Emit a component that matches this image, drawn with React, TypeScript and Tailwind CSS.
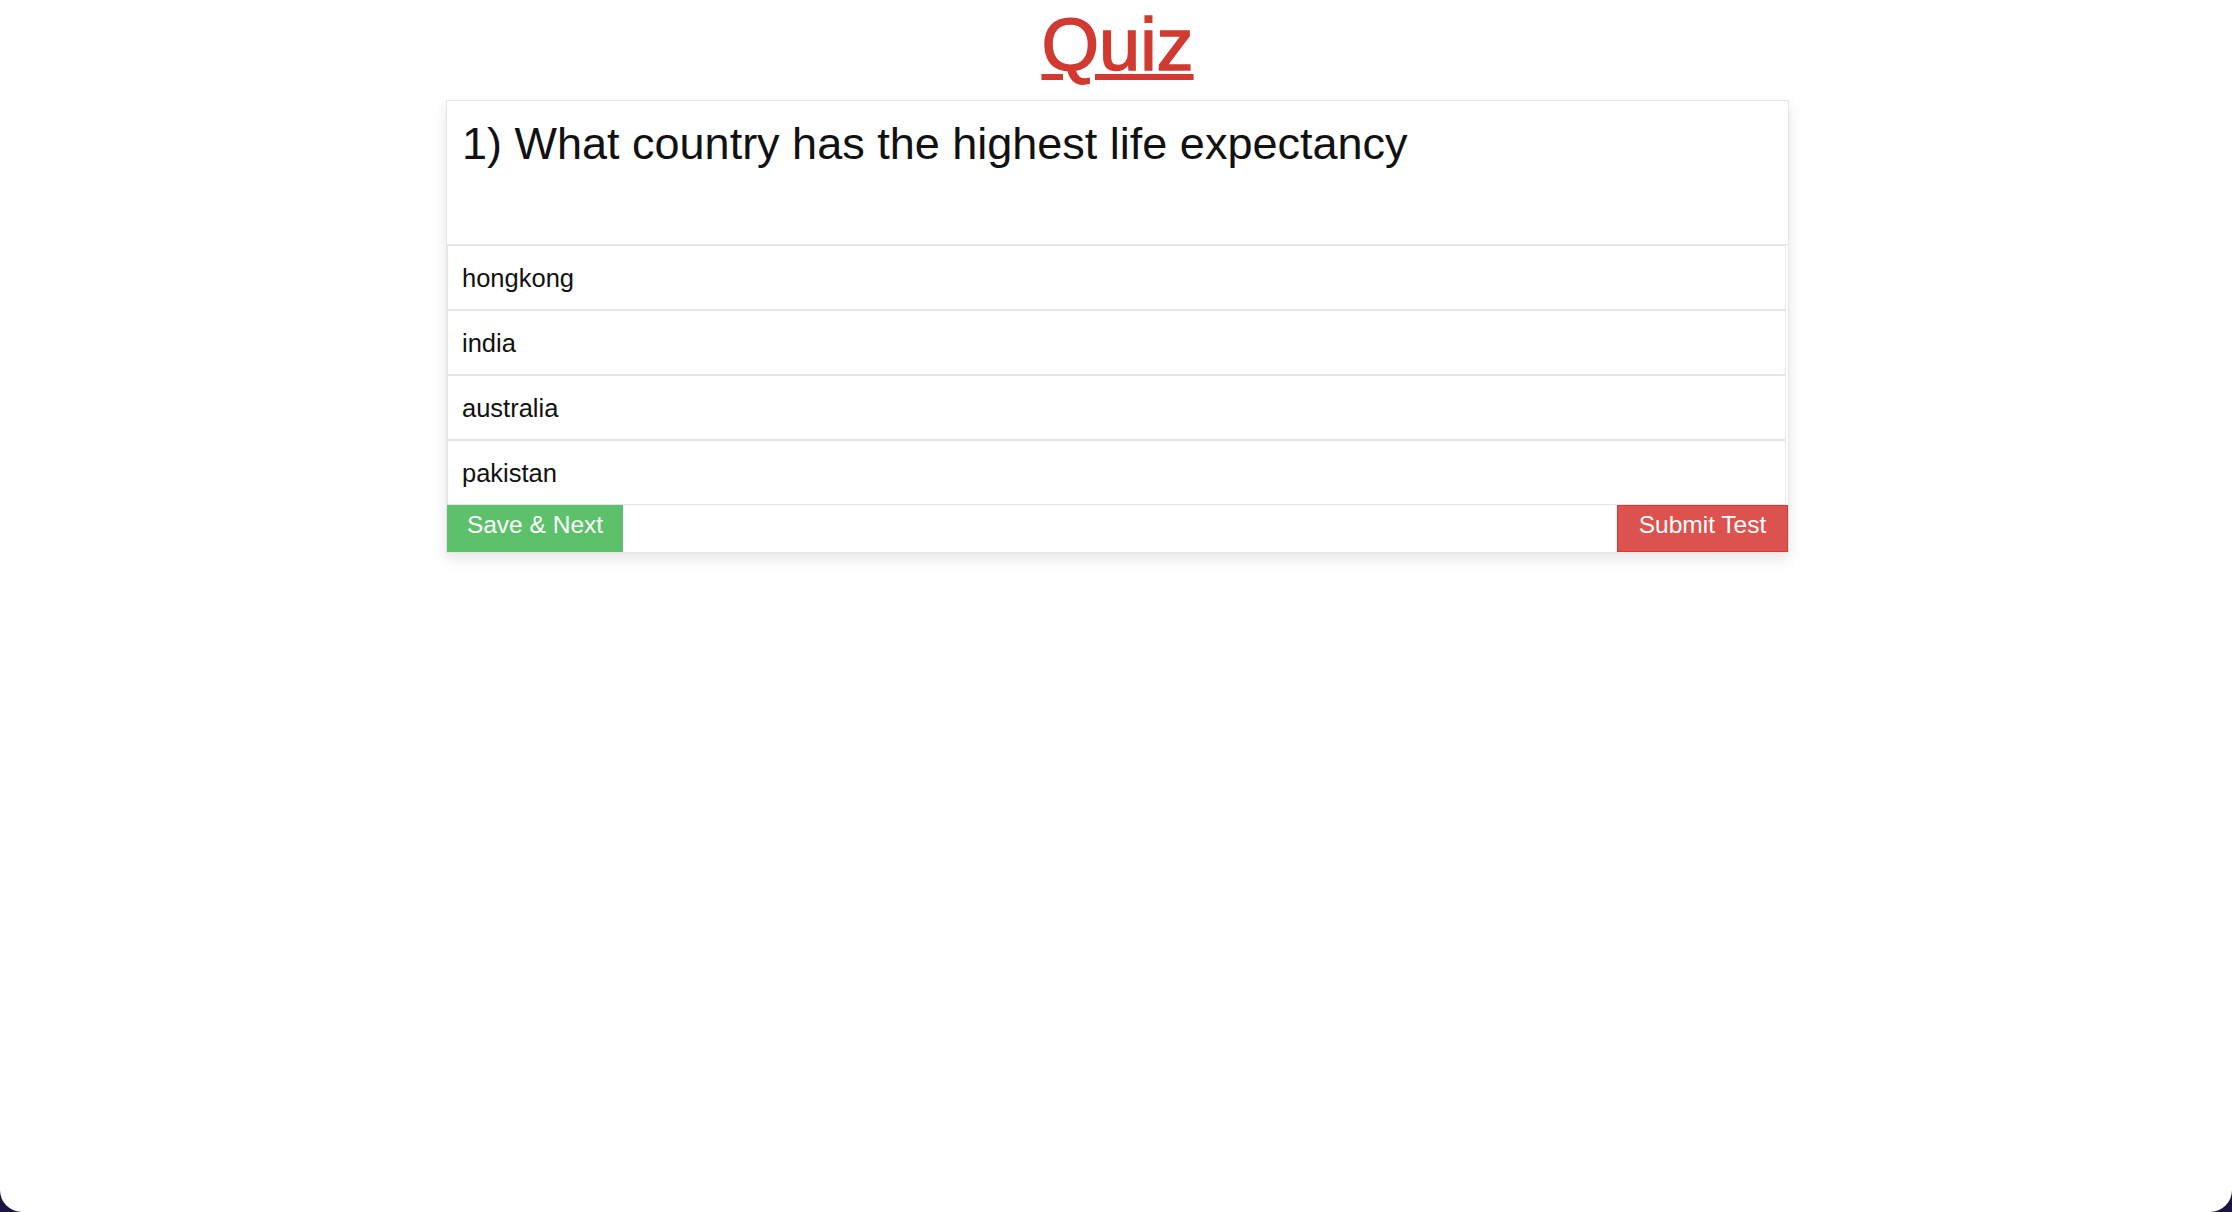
import React from "react";

const options = ["hongkong", "india", "australia", "pakistan"];

export default function App() {
  return (
    <div className="w-full h-[1212px] bg-[#1b1442]">
      <div
        className="w-full h-full bg-white rounded-b-[22px] flex flex-col items-center pl-[3px]"
        style={{ fontFamily: '"Liberation Sans", Arial, sans-serif' }}
      >
        <a
          href="#"
          className="block mt-[-3px] mb-[7px] text-[74px] leading-[96px] text-[#d03a30] underline decoration-[6px] underline-offset-[4px] [-webkit-text-stroke:1.5px_#d03a30]"
        >
          Quiz
        </a>
        <div className="w-[1343px] border border-[#e4e4ea] bg-white shadow-[0_6px_14px_rgba(0,0,0,0.10)]">
          <div className="h-[144px] border-b border-[#e4e4ea] pl-[15px] pt-[15px]">
            <div className="text-[45px] leading-[56px] text-[#111]">1) What country has the highest life expectancy</div>
          </div>
          {options.map((o) => (
            <div key={o} className="h-[65px] border border-[#e4e4ea] mr-[2px] flex items-center pl-[14px] pt-[1px] text-[25.5px] text-[#111]">
              {o}
            </div>
          ))}
          <div className="flex justify-between h-[47px]">
            <button className="w-[176px] h-full bg-[#5cc16a] text-white text-[24.5px] leading-none pb-[6px]">Save &amp; Next</button>
            <button className="w-[171px] h-full bg-[#dc524e] border border-[#d9382f] text-white text-[24.5px] leading-none pb-[6px]">Submit Test</button>
          </div>
        </div>
      </div>
    </div>
  );
}
